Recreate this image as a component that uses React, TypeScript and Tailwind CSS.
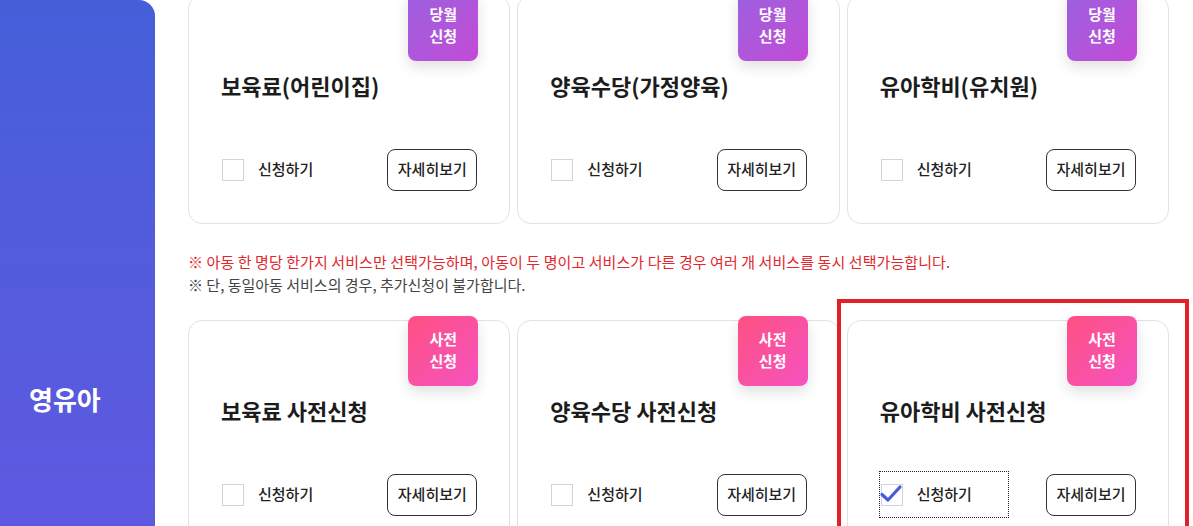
import React from "react";

type Service = {
  title: string;
  badge: string[];
  kind: "month" | "pre";
  checked?: boolean;
  highlight?: boolean;
};

const topRow: Service[] = [
  { title: "보육료(어린이집)", badge: ["당월", "신청"], kind: "month" },
  { title: "양육수당(가정양육)", badge: ["당월", "신청"], kind: "month" },
  { title: "유아학비(유치원)", badge: ["당월", "신청"], kind: "month" },
];

const bottomRow: Service[] = [
  { title: "보육료 사전신청", badge: ["사전", "신청"], kind: "pre" },
  { title: "양육수당 사전신청", badge: ["사전", "신청"], kind: "pre" },
  {
    title: "유아학비 사전신청",
    badge: ["사전", "신청"],
    kind: "pre",
    checked: true,
    highlight: true,
  },
];

const ServiceCard = ({ item }: { item: Service }) => {
  return (
    <div className="relative h-[229px] rounded-[14px] border border-[#e2e2e2] bg-white px-[32px] pt-[74px]">
      {item.highlight && (
        <div className="pointer-events-none absolute -left-[11px] -top-[22px] -right-[21px] -bottom-[40px] border-[4px] border-[#e3202a]" />
      )}
      <div
        className={
          item.kind === "month"
            ? "absolute -top-[5px] right-[31px] flex h-[70px] w-[70px] flex-col items-center justify-center rounded-[8px] bg-gradient-to-br from-[#9a60df] to-[#c34ad6] pb-[3px] text-[15px] font-semibold leading-[22px] text-white shadow-[0_6px_14px_rgba(0,0,0,0.12)]"
            : "absolute -top-[5px] right-[31px] flex h-[70px] w-[70px] flex-col items-center justify-center rounded-[8px] bg-gradient-to-br from-[#ff4f82] to-[#f552bf] pb-[3px] text-[15px] font-semibold leading-[22px] text-white shadow-[0_6px_14px_rgba(0,0,0,0.12)]"
        }
      >
        <span>{item.badge[0]}</span>
        <span>{item.badge[1]}</span>
      </div>
      <h3 className="text-[22px] font-bold leading-[30px] text-[#1c1c1c]">
        {item.title}
      </h3>
      <div className="mt-[47px] flex items-center justify-between">
        <label
          className={
            item.checked
              ? "flex h-[45px] w-[128px] items-center gap-[14px] outline outline-1 outline-dotted outline-[#222]"
              : "flex h-[45px] w-[128px] items-center gap-[14px]"
          }
        >
          <span className="relative ml-[1px] block h-[22px] w-[22px] border border-[#cfd4e0] bg-white">
            {item.checked && (
              <svg
                viewBox="0 0 24 24"
                className="absolute -left-[3px] -top-[3px] h-[24px] w-[24px]"
              >
                <path
                  d="M3 12.5 L9 18 L21 5"
                  fill="none"
                  stroke="#4a5ad8"
                  strokeWidth="3.2"
                  strokeLinecap="round"
                  strokeLinejoin="round"
                />
              </svg>
            )}
          </span>
          <span className="text-[15px] font-medium text-[#222]">신청하기</span>
        </label>
        <button className="h-[42px] w-[90px] rounded-[8px] border border-[#333] bg-white text-[15px] font-medium text-[#222]">
          자세히보기
        </button>
      </div>
    </div>
  );
};

export default function App() {
  return (
    <div
      className="flex h-[526px] w-full overflow-hidden bg-white"
      style={{ fontFamily: '"Noto Sans CJK KR", "Noto Sans", sans-serif' }}
    >
      <aside className="flex h-[700px] w-[155px] shrink-0 flex-col rounded-tr-[16px] bg-gradient-to-b from-[#455fd9] to-[#6656e3] pl-[29px] pt-[382px]">
        <span className="text-[26px] font-bold leading-[34px] text-white">
          영유아
        </span>
      </aside>
      <main className="-mt-[5px] ml-[33px] w-[981px]">
        <div className="grid grid-cols-3 gap-[7px]">
          {topRow.map((item) => (
            <ServiceCard key={item.title} item={item} />
          ))}
        </div>
        <div className="mt-[26px] text-[15px] leading-[23px]">
          <p className="text-[#e3262c] tracking-[0.08px]">
            ※ 아동 한 명당 한가지 서비스만 선택가능하며, 아동이 두 명이고 서비스가 다른 경우 여러 개 서비스를 동시 선택가능합니다.
          </p>
          <p className="text-[#444]">※ 단, 동일아동 서비스의 경우, 추가신청이 불가합니다.</p>
        </div>
        <div className="mt-[24px] grid grid-cols-3 gap-[7px]">
          {bottomRow.map((item) => (
            <ServiceCard key={item.title} item={item} />
          ))}
        </div>
      </main>
    </div>
  );
}
